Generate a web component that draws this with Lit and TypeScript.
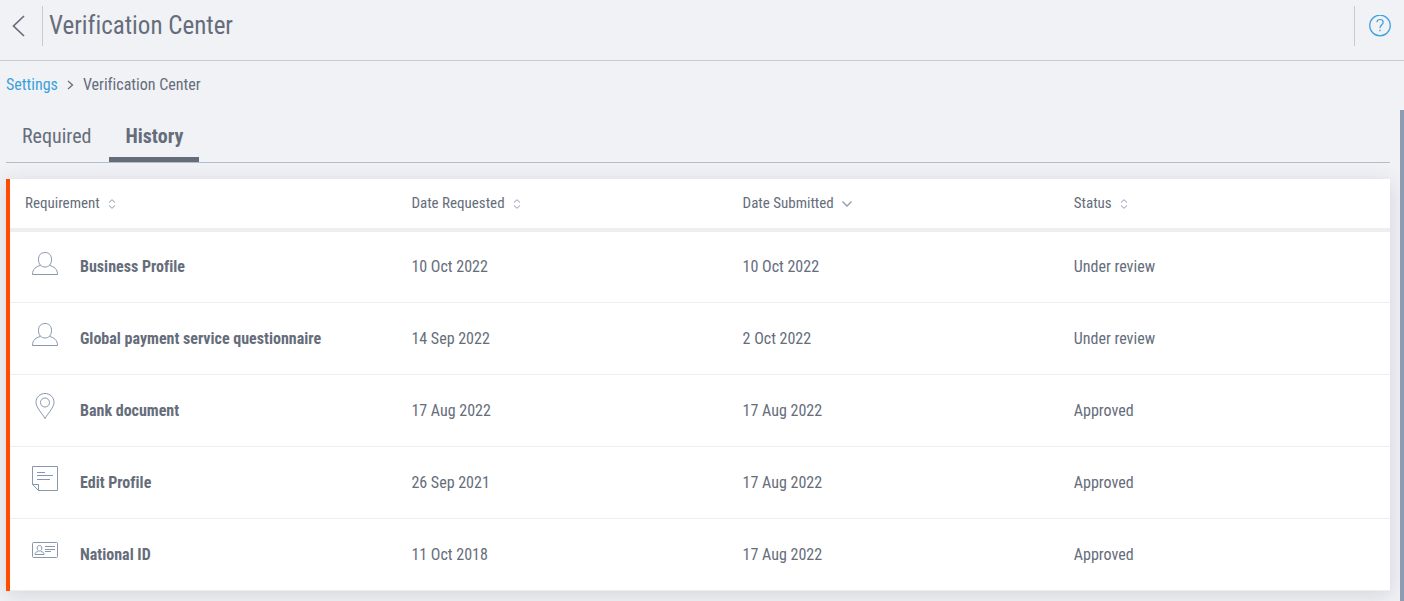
import { LitElement, html, svg, css, nothing } from "lit";
import { customElement, state } from "lit/decorators.js";
import { classMap } from "lit/directives/class-map.js";

type IconName = "person" | "pin" | "note" | "card";

interface Requirement {
  icon: IconName;
  name: string;
  requested: string;
  submitted: string;
  status: string;
}

const ROWS: Requirement[] = [
  { icon: "person", name: "Business Profile", requested: "10 Oct 2022", submitted: "10 Oct 2022", status: "Under review" },
  { icon: "person", name: "Global payment service questionnaire", requested: "14 Sep 2022", submitted: "2 Oct 2022", status: "Under review" },
  { icon: "pin", name: "Bank document", requested: "17 Aug 2022", submitted: "17 Aug 2022", status: "Approved" },
  { icon: "note", name: "Edit Profile", requested: "26 Sep 2021", submitted: "17 Aug 2022", status: "Approved" },
  { icon: "card", name: "National ID", requested: "11 Oct 2018", submitted: "17 Aug 2022", status: "Approved" },
];

const COLUMNS = ["Requirement", "Date Requested", "Date Submitted", "Status"];

const ICONS = {
  person: svg`
    <path d="M13 2.500c-4 0-6.500 2.500-6.500 7 0 4.600 2.500 7.500 6.500 7.500s6.500-2.900 6.500-7.500c0-4.500-2.500-7-6.500-7z"/>
    <path d="M8.500 15.500C4 16.500.5 19 .5 24.500h25c0-5.500-3.500-8-8-9"/>`,
  pin: svg`
    <path d="M13 25.500C9.500 19.500 4 14.500 4 9.300 4 4.300 8 .5 13 .5s9 3.800 9 8.800c0 5.200-5.500 10.200-9 16.200z"/>
    <circle cx="13" cy="9.500" r="4.500"/>`,
  note: svg`
    <path d="M.5 1.500h25v24H6.500L.5 19.500z"/>
    <path d="M.5 19.500h6v6M5 7.500h8M5 10.500h16M5 14.500h13"/>`,
  card: svg`
    <rect x=".5" y="5.500" width="25" height="15" rx="1"/>
    <path d="M7.500 8.500c-1.500 0-2.300 1-2.300 2.600 0 1.700.8 3 2.300 3s2.300-1.300 2.300-3c0-1.600-.8-2.600-2.300-2.600zM6 14.500c-2 .5-3 1-3 3h9c0-2-1-2.500-3-3M13 9.500h10M13 12.500h10M13 14.500h6"/>`,
};

@customElement("app-root")
export class AppRoot extends LitElement {
  @state() private tab = "History";

  static styles = css`
    :host {
      display: flex;
      flex-direction: column;
      min-height: 100vh;
      background: #f1f2f6;
      color: #656d7b;
      font-family: "Roboto Condensed", Roboto, sans-serif;
      font-size: 16px;
      line-height: 24px;
      font-variant-ligatures: none;
    }
    * { box-sizing: border-box; }
    button {
      font: inherit;
      font-variant-ligatures: inherit;
      color: inherit;
      background: none;
      border: 0;
      padding: 0;
      cursor: pointer;
    }
    svg { display: block; fill: none; stroke: currentColor; }
    .bar {
      display: flex;
      align-items: center;
      height: 61px;
      padding: 0 13px 9px 12px;
      border-bottom: 1px solid #c6c9d6;
    }
    .back { width: 30px; height: 40px; }
    .title {
      flex: 1;
      margin: 0;
      padding-left: 6px;
      border-left: 1px solid #c6c9d6;
      font-size: 25px;
      font-weight: 400;
      line-height: 40px;
    }
    .help {
      height: 40px;
      padding-left: 14px;
      border-left: 1px solid #c6c9d6;
      color: #3b9fdc;
    }
    .body { flex: 1; display: flex; }
    .main { flex: 1; padding: 12px 10px 10px 6px; }
    .rail { width: 4px; margin-top: 49px; background: #8f9bb0; }
    .crumbs { display: flex; align-items: center; gap: 9px; }
    .crumbs a { color: #3b9fdc; text-decoration: none; }
    .tabs {
      display: flex;
      gap: 2px;
      margin: 13px 0 16px;
      border-bottom: 1px solid #b3bccb;
    }
    .tab {
      height: 52px;
      padding: 4px 16px 0;
      border-bottom: 5px solid transparent;
      font-size: 20px;
    }
    .tab.active { font-weight: 700; border-color: #656d7b; }
    .card {
      background: #fff;
      border-left: 4px solid #ff4b00;
      box-shadow: 0 4px 20px rgba(60, 64, 80, 0.16);
    }
    .grid {
      width: 100%;
      table-layout: fixed;
      border-collapse: collapse;
      text-align: left;
    }
    th, td { width: 24%; padding: 0 15px; }
    th:first-child, td:first-child { width: 28%; }
    th {
      height: 51px;
      padding-bottom: 2px;
      border-bottom: 4px solid #eee;
      font-size: 15px;
      font-weight: 400;
    }
    td { height: 72px; padding-top: 1px; border-bottom: 1px solid #eee; }
    .sort { display: flex; align-items: center; gap: 8px; }
    .sort svg { margin-top: 3px; color: #8f9bb0; }
    .req { display: flex; align-items: center; gap: 22px; padding-left: 7px; font-weight: 700; }
    .req svg { margin-bottom: 8px; flex: none; color: #8797af; }
  `;

  private sortIcon(column: string) {
    return column === "Date Submitted"
      ? html`<svg width="10" height="10" viewBox="0 0 10 10" stroke-width="1.300" aria-hidden="true"><path d="M.5 2.500 5 7l4.500-4.500"/></svg>`
      : html`<svg width="8" height="10" viewBox="0 0 8 10" aria-hidden="true"><path d="M1 3.500 4 .7l3 2.800M1 6.500l3 2.800 3-2.800"/></svg>`;
  }

  render() {
    return html`
      <header class="bar">
        <button class="back" aria-label="Back">
          <svg width="14" height="22" viewBox="0 0 14 22" stroke-width="1.700"><path d="M12 1 1.500 11 12 21"/></svg>
        </button>
        <h1 class="title">Verification Center</h1>
        <button class="help" aria-label="Help">
          <svg width="22" height="22" viewBox="0 0 22 22" stroke-width="1.200">
            <circle cx="11" cy="10.500" r="10.300"/>
            <path d="M8 7.300C8 5.500 9.300 4.500 11 4.500s3.200 1 3.200 2.800c0 2.300-3.200 2.700-3.200 5.700M11 14.500v1.800"/>
          </svg>
        </button>
      </header>
      <div class="body">
        <main class="main">
          <nav class="crumbs" aria-label="Breadcrumb">
            <a href="#settings">Settings</a>
            <svg width="7" height="10" viewBox="0 0 7 10" stroke-width="1.300" aria-hidden="true"><path d="M1 1l4.500 4L1 9"/></svg>
            <span>Verification Center</span>
          </nav>
          <div class="tabs" role="tablist">
            ${["Required", "History"].map(
              (t) => html`<button
                role="tab"
                class=${classMap({ tab: true, active: t === this.tab })}
                aria-selected=${t === this.tab ? "true" : "false"}
                @click=${() => (this.tab = t)}
              >${t}</button>`
            )}
          </div>
          <section class="card">
            <table class="grid">
              <thead>
                <tr>
                  ${COLUMNS.map(
                    (c) => html`<th scope="col" aria-sort=${c === "Date Submitted" ? "descending" : nothing}>
                      <button class="sort">${c}${this.sortIcon(c)}</button>
                    </th>`
                  )}
                </tr>
              </thead>
              <tbody>
                ${ROWS.map(
                  (r) => html`<tr>
                    <td>
                      <div class="req">
                        <svg width="26" height="27" viewBox="0 0 26 27" aria-hidden="true">${ICONS[r.icon]}</svg>
                        <span>${r.name}</span>
                      </div>
                    </td>
                    <td>${r.requested}</td>
                    <td>${r.submitted}</td>
                    <td>${r.status}</td>
                  </tr>`
                )}
              </tbody>
            </table>
          </section>
        </main>
        <div class="rail"></div>
      </div>
    `;
  }
}
